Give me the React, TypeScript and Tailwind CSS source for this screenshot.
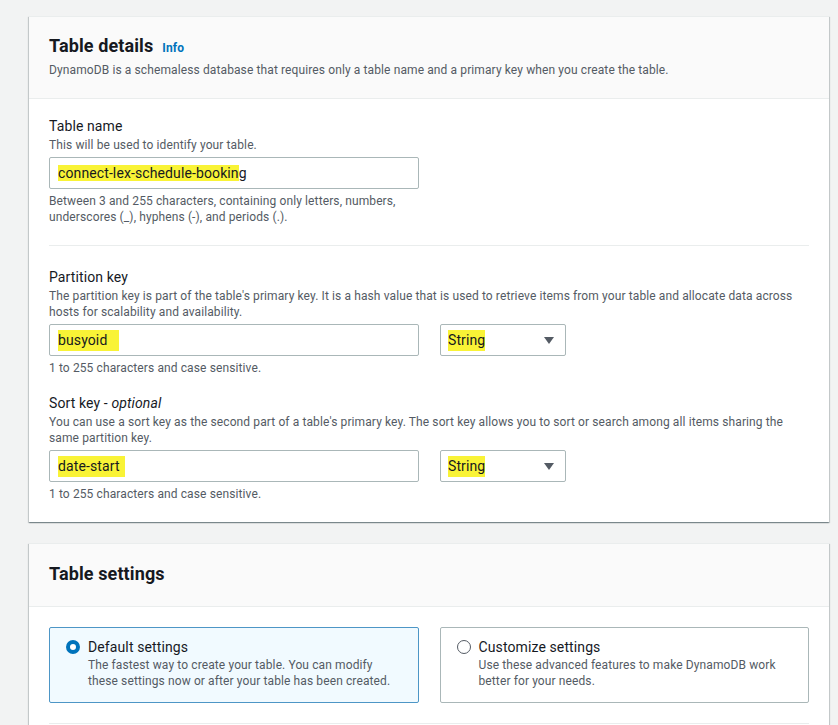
import React from "react";

const font = { fontFamily: "Roboto, 'Noto Sans', Arial, sans-serif", letterSpacing: "0.007em" };

function Hl({ children, extra = "" }: { children: React.ReactNode; extra?: string }) {
  return <span className={`bg-[#f9f336] ${extra}`}>{children}</span>;
}

function TextBox({ children }: { children: React.ReactNode }) {
  return (
    <div className="w-[370px] h-[32px] border border-[#aab7b8] rounded-[2px] bg-white flex items-center pl-[8px] text-[14px] text-[#16191f]">
      {children}
    </div>
  );
}

function SelectBox() {
  return (
    <div className="w-[126px] h-[32px] border border-[#aab7b8] rounded-[2px] bg-white flex items-center justify-between pl-[7px] pr-[11px] text-[14px] text-[#16191f]">
      <Hl>String</Hl>
      <svg width="10" height="7" viewBox="0 0 10 7">
        <path d="M0 0 H10 L5 7 Z" fill="#545b64" />
      </svg>
    </div>
  );
}

const card =
  "w-[800px] bg-white border-t border-[#eaeded] shadow-[0_1px_1px_0_rgba(0,28,36,0.3),1px_1px_1px_0_rgba(0,28,36,0.15),-1px_1px_1px_0_rgba(0,28,36,0.15)]";

export default function App() {
  return (
    <div className="min-h-screen bg-[#f2f3f3] pt-[16px] pl-[29px]" style={font}>
      <div className={card}>
        <div className="bg-[#fafafa] border-b border-[#eaeded] h-[82px] px-[20px] pt-[18px]">
          <div className="flex items-baseline gap-[9px] leading-[22px]">
            <span className="text-[18px] font-bold text-[#16191f]">Table details</span>
            <span className="text-[12px] font-bold text-[#0073bb]">Info</span>
          </div>
          <div className="text-[12px] leading-[16px] text-[#545b64] mt-[3px]">
            DynamoDB is a schemaless database that requires only a table name and a primary key when you create the table.
          </div>
        </div>
        <div className="px-[20px] pt-[17px] pb-[20px]">
          <div className="text-[14px] leading-[20px] text-[#16191f]">Table name</div>
          <div className="mt-[1px] text-[12px] leading-[16px] text-[#545b64]">This will be used to identify your table.</div>
          <div className="mt-[4px]">
            <TextBox>
              <span>
                <Hl>connect-lex-schedule-bookin</Hl>g
              </span>
            </TextBox>
          </div>
          <div className="mt-[4px] text-[12px] leading-[16px] text-[#545b64] w-[370px]">
            Between 3 and 255 characters, containing only letters, numbers, underscores (_), hyphens (-), and periods (.).
          </div>
          <div className="mt-[20px] border-t border-[#eaeded]" />

          <div className="mt-[21px] text-[14px] leading-[20px] text-[#16191f]">Partition key</div>
          <div className="mt-[1px] text-[12px] leading-[16px] text-[#545b64]">
            The partition key is part of the table's primary key. It is a hash value that is used to retrieve items from your table and allocate data across hosts for scalability and availability.
          </div>
          <div className="mt-[4px] flex gap-[21px]">
            <TextBox>
              <Hl extra="pr-[12px]">busyoid</Hl>
            </TextBox>
            <SelectBox />
          </div>
          <div className="mt-[4px] text-[12px] leading-[16px] text-[#545b64]">1 to 255 characters and case sensitive.</div>

          <div className="mt-[17px] text-[14px] leading-[20px] text-[#16191f]">
            Sort key - <i>optional</i>
          </div>
          <div className="mt-[1px] text-[12px] leading-[16px] text-[#545b64]">
            You can use a sort key as the second part of a table's primary key. The sort key allows you to sort or search among all items sharing the same partition key.
          </div>
          <div className="mt-[4px] flex gap-[21px]">
            <TextBox>
              <Hl extra="pr-[5px]">date-start</Hl>
            </TextBox>
            <SelectBox />
          </div>
          <div className="mt-[4px] text-[12px] leading-[16px] text-[#545b64]">1 to 255 characters and case sensitive.</div>
        </div>
      </div>

      <div className={`${card} mt-[21px]`}>
        <div className="bg-[#fafafa] border-b border-[#eaeded] h-[63px] px-[20px] pt-[19px]">
          <div className="text-[18px] leading-[22px] font-bold text-[#16191f]">Table settings</div>
        </div>
        <div className="px-[20px] pt-[20px] pb-[20px]">
          <div className="flex gap-[21px]">
            <div className="w-[370px] h-[76px] border border-[#4d96c6] rounded-[2px] bg-[#f1faff] flex pl-[16px] pt-[9px]">
              <div className="w-[14px] h-[14px] rounded-full border-[4px] border-[#0073bb] bg-white mt-[3px]" />
              <div className="ml-[8px]">
                <div className="text-[14px] leading-[20px] text-[#16191f]">Default settings</div>
                <div className="text-[12px] leading-[16px] text-[#545b64]">
                  The fastest way to create your table. You can modify
                  <br />
                  these settings now or after your table has been created.
                </div>
              </div>
            </div>
            <div className="w-[370px] h-[76px] border border-[#aab7b8] rounded-[2px] bg-white flex pl-[16px] pt-[9px]">
              <div className="w-[14px] h-[14px] rounded-full border border-[#545b64] bg-white mt-[3px]" />
              <div className="ml-[8px]">
                <div className="text-[14px] leading-[20px] text-[#16191f]">Customize settings</div>
                <div className="text-[12px] leading-[16px] text-[#545b64]">
                  Use these advanced features to make DynamoDB work
                  <br />
                  better for your needs.
                </div>
              </div>
            </div>
          </div>
          <div className="mt-[20px] border-t border-[#eaeded]" />
        </div>
      </div>
    </div>
  );
}
